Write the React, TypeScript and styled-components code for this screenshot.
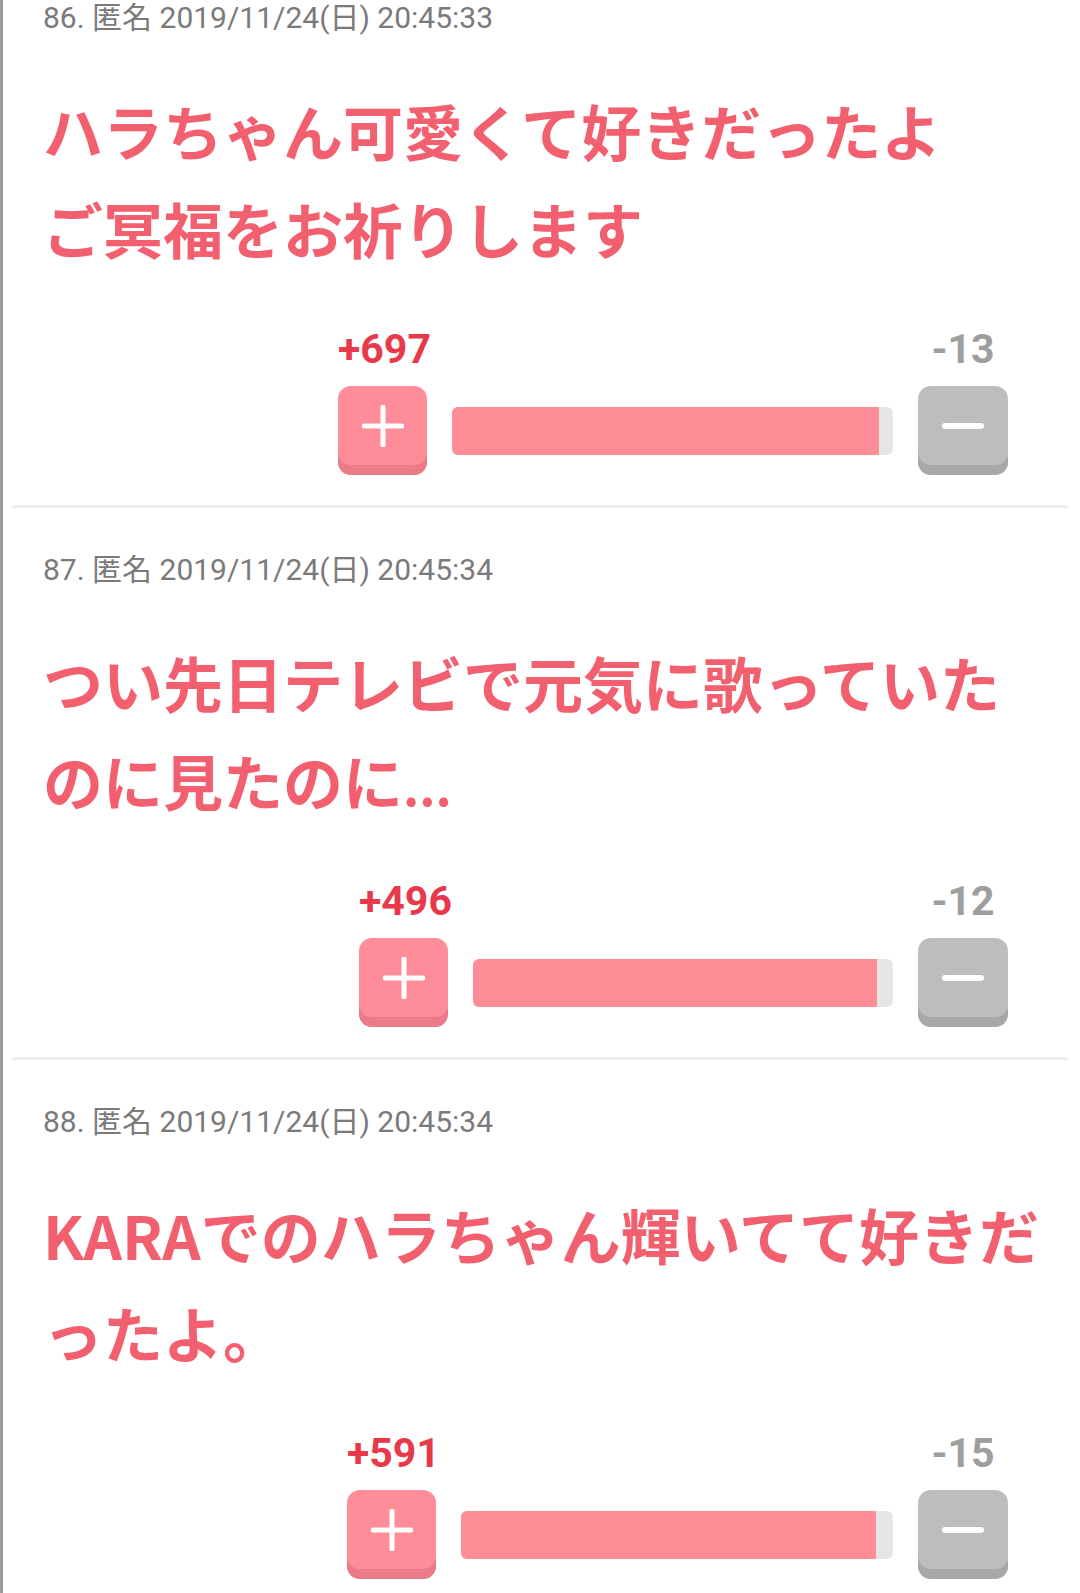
import React from 'react'
import styled, { createGlobalStyle } from 'styled-components'

type Comment = {
  no: number
  date: string
  body: string
  plus: number
  minus: number
  barWidth: number
}

const comments: Comment[] = [
  {
    no: 86,
    date: '2019/11/24(日) 20:45:33',
    body: 'ハラちゃん可愛くて好きだったよ\nご冥福をお祈りします',
    plus: 697,
    minus: 13,
    barWidth: 441,
  },
  {
    no: 87,
    date: '2019/11/24(日) 20:45:34',
    body: 'つい先日テレビで元気に歌っていた\nのに見たのに...',
    plus: 496,
    minus: 12,
    barWidth: 420,
  },
  {
    no: 88,
    date: '2019/11/24(日) 20:45:34',
    body: 'KARAでのハラちゃん輝いてて好きだ\nったよ。',
    plus: 591,
    minus: 15,
    barWidth: 432,
  },
]

const GlobalStyle = createGlobalStyle`
  html, body {
    margin: 0;
    padding: 0;
    background: #ffffff;
  }
  body {
    font-family: Roboto, "Noto Sans CJK JP", sans-serif;
    -webkit-font-smoothing: antialiased;
  }
`

const PlusIcon = () => (
  <svg width="42" height="42" viewBox="0 0 42 42">
    <line x1="21" y1="2" x2="21" y2="40" stroke="#fff" strokeWidth="5" strokeLinecap="round" />
    <line x1="2" y1="21" x2="40" y2="21" stroke="#fff" strokeWidth="5" strokeLinecap="round" />
  </svg>
)

const MinusIcon = () => (
  <svg width="42" height="10" viewBox="0 0 42 10">
    <line x1="3" y1="5" x2="39" y2="5" stroke="#fff" strokeWidth="6" strokeLinecap="round" />
  </svg>
)

// the body text keeps its own line breaks; dots are set a bit smaller
const renderBody = (text: string) =>
  text.split(/(\.\.\.)/).map((part, i) =>
    part === '...' ? <Dots key={i}>{part}</Dots> : <React.Fragment key={i}>{part}</React.Fragment>
  )

const App = () => {
  return (
    <Page>
      <GlobalStyle />
      {comments.map((c) => {
        const pct = (c.plus / (c.plus + c.minus)) * 100
        return (
          <Item key={c.no}>
            <Meta>
              {c.no}. 匿名 {c.date}
            </Meta>
            <Body>{renderBody(c.body)}</Body>
            <Votes style={{ gridTemplateColumns: `89px ${c.barWidth}px 90px` }}>
              <Count $up>+{c.plus}</Count>
              <span />
              <Count>-{c.minus}</Count>
              <VoteButton $up>
                <PlusIcon />
              </VoteButton>
              <Bar>
                <BarFill style={{ width: `calc(${pct}% - 6px)` }} />
              </Bar>
              <VoteButton>
                <MinusIcon />
              </VoteButton>
            </Votes>
          </Item>
        )
      })}
    </Page>
  )
}

export default App

const Page = styled.div`
  width: 1080px;
  min-height: 1593px;
  box-sizing: border-box;
  border-left: 3px solid #9c9c9c;
  padding: 0 12px 0 9px;
  overflow: hidden;
`

const Item = styled.section`
  padding: 44px 60px 30px 31px;
  border-top: 3px solid #eeeeee;
  &:first-child {
    padding-top: 0;
    border-top: none;
  }
`

const Meta = styled.div`
  height: 36px;
  line-height: 36px;
  font-size: 30px;
  color: #7a7a7a;
  font-family: Roboto, "Noto Sans CJK JP", sans-serif;
`

const Body = styled.div`
  margin-top: 45px;
  font-family: "Noto Sans CJK JP", sans-serif;
  font-weight: 700;
  font-size: 60px;
  line-height: 98px;
  color: #f25f6e;
  white-space: pre;
`

const Dots = styled.span`
  font-size: 50px;
  line-height: 1;
`

const Votes = styled.div`
  margin-top: 50px;
  display: grid;
  justify-content: end;
  grid-template-rows: 44px 89px;
  column-gap: 25px;
  row-gap: 15px;
`

const Count = styled.div<{ $up?: boolean }>`
  text-align: center;
  font-family: Roboto, sans-serif;
  font-weight: 700;
  font-size: 41px;
  line-height: 44px;
  color: ${(p) => (p.$up ? '#e8394b' : '#9e9e9e')};
`

const VoteButton = styled.div<{ $up?: boolean }>`
  display: flex;
  align-items: center;
  justify-content: center;
  box-sizing: border-box;
  height: 89px;
  padding-bottom: 10px;
  border-radius: 13px;
  background: ${(p) => (p.$up ? '#ff8d99' : '#bdbdbd')};
  box-shadow: inset 0 -10px 0 ${(p) => (p.$up ? '#ea7b88' : '#a8a8a8')};
`

const Bar = styled.div`
  align-self: center;
  height: 48px;
  border-radius: 6px;
  background: #e6e6e6;
  overflow: hidden;
`

const BarFill = styled.div`
  height: 100%;
  background: #ff8d98;
`
